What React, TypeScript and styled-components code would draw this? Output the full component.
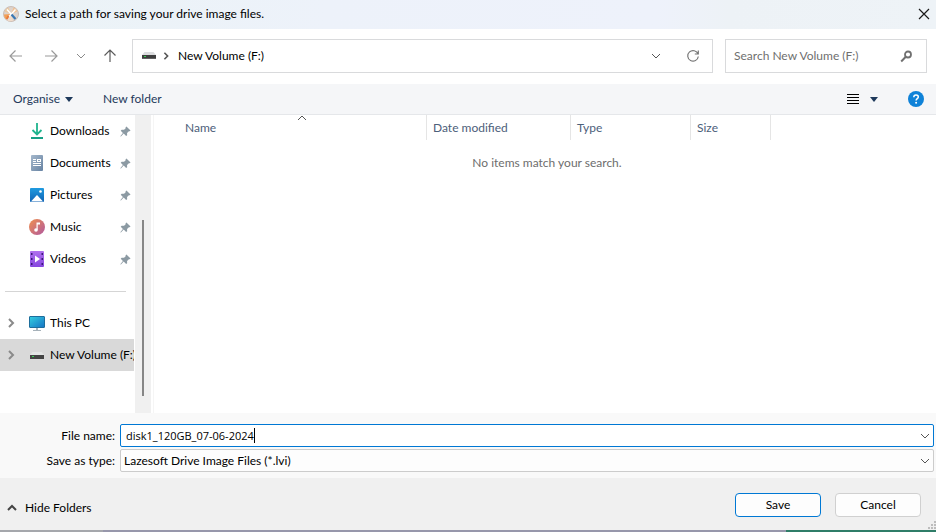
import React, { useState } from "react";
import styled, { createGlobalStyle } from "styled-components";

const GlobalStyle = createGlobalStyle`
  *, *::before, *::after { box-sizing: border-box; }
  body { margin: 0; background: #fff; }
  body, button, input, select {
    font-family: Lato, "Open Sans", sans-serif;
    font-size: 12px;
    line-height: 16px;
    color: #000;
  }
  svg { display: block; flex: none; }
`;

const Dialog = styled.main`
  display: flex;
  flex-direction: column;
  min-height: 100vh;
`;

const TitleBar = styled.header`
  display: flex;
  align-items: center;
  gap: 6px;
  height: 29px;
  padding: 0 6px 2px 3px;
  background: linear-gradient(90deg, #ebf3f6 0%, #edf2fa 35%, #eef2fb 70%, #edf2f6 78%, #eef3f7 100%);
`;

const Title = styled.h1`
  flex: 1;
  margin: 0;
  font-size: 12px;
  font-weight: 400;
  line-height: 16px;
`;

const IconButton = styled.button<{ $w?: number }>`
  display: flex;
  align-items: center;
  justify-content: center;
  width: ${(p) => p.$w ?? 16}px;
  height: 24px;
  padding: 0;
  border: 0;
  background: none;
`;

const NavBar = styled.nav`
  display: flex;
  align-items: center;
  gap: 12px;
  height: 55px;
  padding: 0 9px 1px 8px;
`;

const NavButtons = styled.div`
  display: flex;
  gap: 15px;
  width: 112px;
`;

const AddressBar = styled.div`
  display: flex;
  flex: 1;
  align-items: center;
  height: 34px;
  padding: 0 0 0 9px;
  border: 1px solid #d9dadc;
`;

const Crumb = styled.button`
  flex: 1;
  padding: 0 0 0 2px;
  border: 0;
  background: none;
  text-align: left;
`;

const SearchBox = styled.label`
  display: flex;
  align-items: center;
  width: 202px;
  height: 34px;
  padding: 0 13px 0 8px;
  border: 1px solid #d9dadc;
`;

const SearchInput = styled.input`
  flex: 1;
  min-width: 0;
  padding: 0;
  border: 0;
  outline: 0;
  background: none;
  &::placeholder { color: #6f6f6f; opacity: 1; }
`;

const ToolBar = styled.div`
  display: flex;
  align-items: center;
  height: 31px;
  padding: 0 12px 0 13px;
  border-bottom: 1px solid #e5e7ea;
  background: #f5f6f8;
`;

const ToolButton = styled.button`
  display: flex;
  align-items: center;
  gap: 5px;
  margin-right: 30px;
  padding: 0;
  border: 0;
  background: none;
  color: #1e395b;
`;

const ViewTools = styled.div`
  display: flex;
  gap: 6px;
  margin: 0 26px 0 auto;
`;

const Body = styled.div`
  display: flex;
  flex: 1;
  min-height: 298px;
`;

const Sidebar = styled.aside`
  width: 135px;
  padding-right: 1px;
`;

const FolderLink = styled.a<{ $selected?: boolean }>`
  display: flex;
  align-items: center;
  height: 32px;
  padding-left: 6px;
  overflow: hidden;
  background: ${(p) => (p.$selected ? "#d9d9d9" : "transparent")};
  color: #000;
  text-decoration: none;
  white-space: nowrap;
`;

const Expander = styled.span`
  flex: 0 0 23px;
`;

const FolderName = styled.span<{ $pinned?: boolean }>`
  flex: ${(p) => (p.$pinned ? "0 0 70px" : "none")};
  margin-left: 5px;
`;

const Divider = styled.hr`
  height: 1px;
  margin: 16px 8px 15px 5px;
  border: 0;
  background: #d5d5d5;
`;

const ScrollTrack = styled.div`
  display: flex;
  flex-direction: column;
  align-items: center;
  width: 16px;
  padding: 105px 0 17px;
  background: #f0f0f0;
`;

const ScrollThumb = styled.div`
  flex: 1;
  width: 2px;
  background: #868686;
`;

const FilePane = styled.section`
  flex: 1;
  margin-left: 2px;
  padding-left: 24px;
  border-left: 1px solid #f5f5f5;
`;

const FileTable = styled.table`
  width: 100%;
  border-collapse: separate;
  border-spacing: 0;
  table-layout: fixed;
`;

const HeadCell = styled.th<{ $w?: number }>`
  position: relative;
  width: ${(p) => (p.$w ? `${p.$w}px` : "auto")};
  height: 25px;
  padding: 0 0 0 6px;
  border-right: ${(p) => (p.$w ? "1px solid #e5e5e5" : "0")};
  color: #4c607a;
  font-weight: 400;
  text-align: left;
  &:first-child { padding-left: 7px; }
`;

const SortMark = styled.span`
  position: absolute;
  top: -2px;
  left: 50%;
  transform: translateX(-50%);
`;

const EmptyCell = styled.td`
  height: 46px;
  padding: 0 20px 0 0;
  color: #6d6d6d;
  text-align: center;
`;

const Fields = styled.div`
  display: grid;
  grid-template-columns: 115px 1fr;
  gap: 2px 5px;
  align-items: center;
  padding: 11px 2px 6px 0;
  background: #f9f9f9;
`;

const FieldLabel = styled.label`
  text-align: right;
`;

const Combo = styled.div<{ $active?: boolean }>`
  position: relative;
  display: flex;
  align-items: center;
  height: 23px;
  border: 1px solid ${(p) => (p.$active ? "#0078d4" : "#cccccc")};
  border-radius: 2px;
  background: ${(p) => (p.$active ? "#fff" : "#fdfdfd")};
`;

const NameInput = styled.input`
  field-sizing: content;
  height: 16px;
  padding: 0 0 0 5px;
  border: 0;
  outline: 0;
  background: none;
  font-family: "Open Sans", sans-serif;
  font-size: 11px;
`;

const Caret = styled.span`
  width: 1px;
  height: 15px;
  margin-right: auto;
  background: #000;
`;

const TypeSelect = styled.select`
  flex: 1;
  height: 21px;
  padding: 0 24px 0 3px;
  border: 0;
  outline: 0;
  appearance: none;
  background: none;
`;

const ComboArrow = styled.span`
  position: absolute;
  right: 3px;
  pointer-events: none;
`;

const Footer = styled.footer`
  position: relative;
  display: flex;
  align-items: center;
  gap: 14px;
  height: 52px;
  padding: 2px 15px 0 7px;
  background: #f0f0f0;
`;

const HideButton = styled.button`
  display: flex;
  align-items: center;
  gap: 8px;
  margin: 6px auto 0 0;
  padding: 0;
  border: 0;
  background: none;
`;

const ActionButton = styled.button<{ $primary?: boolean }>`
  width: 86px;
  height: 24px;
  padding: 0;
  border: 1px solid ${(p) => (p.$primary ? "#0078d4" : "#d0d0d0")};
  border-radius: 4px;
  background: #fdfdfd;
`;

const Grip = styled.span`
  position: absolute;
  right: 0;
  bottom: 1px;
`;

const Backdrop = styled.div`
  height: 2px;
  background: linear-gradient(90deg, #a5a7ac 0 11%, #9797ab 11% 84%, #2f7d68 84%);
`;

type ChevronProps = { d: "up" | "down" | "right"; size?: number; color?: string; width?: number };

const Chevron = ({ d, size = 10, color = "#555", width = 1 }: ChevronProps) => {
  const points = { up: "1,7 5,3 9,7", down: "1,3 5,7 9,3", right: "3,1 7,5 3,9" }[d];
  return (
    <svg width={size} height={size} viewBox="0 0 10 10" aria-hidden="true">
      <polyline points={points} fill="none" stroke={color} strokeWidth={width} />
    </svg>
  );
};

const Arrow = ({ turn, color }: { turn: number; color: string }) => (
  <svg width="14" height="14" viewBox="0 0 14 14" aria-hidden="true">
    <g transform={`rotate(${turn} 7 7)`} fill="none" stroke={color} strokeWidth="1.2">
      <path d="M13 7H1.500M6.500 1.500L1 7l5.500 5.500" />
    </g>
  </svg>
);

const Triangle = () => (
  <svg width="8" height="5" viewBox="0 0 8 5" aria-hidden="true">
    <path d="M0 0h8L4 5z" fill="#1e395b" />
  </svg>
);

const AppIcon = () => (
  <svg width="16" height="16" viewBox="0 0 16 16" aria-hidden="true">
    <circle cx="8" cy="8" r="7.500" fill="#ddd3cc" stroke="#cbbdb4" />
    <path d="M8 8L1.500 5.500a7 7 0 0 1 4-4z" fill="#e9c9a0" />
    <path d="M8 8l6.500-2.500a7 7 0 0 0-4-4z" fill="#f0c193" />
    <path d="M8 8L3 13.500a7 7 0 0 1-2-5z" fill="#f2a057" />
    <path d="M8 8l-4 6.200a7 7 0 0 0 6 .5z" fill="#f0dccb" />
    <path d="M4 3.500l5 5.500M12.500 3.500L6 10.500" stroke="#fff" strokeWidth="1.500" />
    <path d="M8.500 8.500l4 4.500" stroke="#3a78b4" strokeWidth="2.200" />
    <path d="M5.500 10l-1.800 3" stroke="#e8793a" strokeWidth="1.800" />
  </svg>
);

const DriveIcon = () => (
  <svg width="14" height="8" viewBox="0 0 14 8" aria-hidden="true">
    <path d="M2.500 0h9L14 3H0z" fill="#dcdddf" />
    <path d="M0 3h14v4H0z" fill="#3e3e3e" />
    <path d="M0 6h14v1H0z" fill="#626262" />
    <path d="M2 4h2v1H2z" fill="#39d353" />
  </svg>
);

const PinIcon = () => (
  <svg width="11" height="11" viewBox="0 0 12 12" aria-hidden="true">
    <path d="M7 0.500L11.500 5l-1 .8-.8-.1-2 2 .1 2.300-1.100 1-2.700-2.700L1 11.500l-.7-.3L3.200 7.500.8 5.200l1-1.100 2.600.1 1.800-1.800-.1-1z" fill="#8c9aa3" />
  </svg>
);

const DownloadsIcon = () => (
  <svg width="16" height="16" viewBox="0 0 16 16" aria-hidden="true">
    <path d="M8 0v11.500M3.500 7L8 11.500 12.500 7" fill="none" stroke="#1fb48e" strokeWidth="1.800" />
    <path d="M2 14h12v2H2z" fill="#16a085" />
  </svg>
);

const DocumentsIcon = () => (
  <svg width="16" height="16" viewBox="0 0 16 16" aria-hidden="true">
    <defs>
      <linearGradient id="doc" x2="1" y2="1"><stop stopColor="#a5b8cc" /><stop offset="1" stopColor="#6783a3" /></linearGradient>
    </defs>
    <rect x="2" width="12" height="16" rx="1" fill="url(#doc)" />
    <path d="M4 4h3v1H4zM4 6h3v1H4zM8 4h4v3H8zM4 8h8v1H4zM4 10h8v1H4z" fill="#fff" />
    <path d="M9 5h2v1H9z" fill="#8aa0b8" />
  </svg>
);

const PicturesIcon = () => (
  <svg width="16" height="16" viewBox="0 0 16 16" aria-hidden="true">
    <defs>
      <linearGradient id="pic" x2="0" y2="1"><stop stopColor="#1f9be0" /><stop offset="1" stopColor="#0f62b4" /></linearGradient>
    </defs>
    <rect x="1" y="1" width="14" height="14" rx="1" fill="url(#pic)" />
    <path d="M2 14.500L8 8l6 6.500z" fill="#fff" />
    <circle cx="11.500" cy="4.500" r="1.300" fill="#fff" />
  </svg>
);

const MusicIcon = () => (
  <svg width="16" height="16" viewBox="0 0 16 16" aria-hidden="true">
    <defs>
      <linearGradient id="mus" x2="1" y2="1"><stop stopColor="#f0914e" /><stop offset="1" stopColor="#b0589f" /></linearGradient>
    </defs>
    <circle cx="8" cy="8" r="8" fill="url(#mus)" />
    <path d="M7.500 3.500h3.500v2H8.700v5.300H7.500z" fill="#fff" />
    <circle cx="7" cy="11" r="1.800" fill="#fff" />
  </svg>
);

const VideosIcon = () => (
  <svg width="16" height="16" viewBox="0 0 16 16" aria-hidden="true">
    <defs>
      <linearGradient id="vid" x2="0" y2="1"><stop stopColor="#b070ee" /><stop offset="1" stopColor="#8646df" /></linearGradient>
    </defs>
    <rect x="1" width="14" height="16" rx="1" fill="url(#vid)" />
    <path d="M2 2h1.500v2H2zM2 7h1.500v2H2zM2 12h1.500v2H2zM12.500 2H14v2h-1.500zM12.500 7H14v2h-1.500zM12.500 12H14v2h-1.500z" fill="#3c1a78" />
    <path d="M6 4.500L11 8l-5 3.500z" fill="#fff" />
  </svg>
);

const PcIcon = () => (
  <svg width="16" height="16" viewBox="0 0 16 16" aria-hidden="true">
    <defs>
      <linearGradient id="pc" x2="1" y2="1"><stop stopColor="#35cfe0" /><stop offset="1" stopColor="#1673c4" /></linearGradient>
    </defs>
    <rect x="0.500" y="1.500" width="15" height="11" rx="0.500" fill="url(#pc)" stroke="#1e6e9c" />
    <path d="M7 13h2v2h3v1H4v-1h3z" fill="#a7b2ba" />
  </svg>
);

const SidebarDrive = () => (
  <svg width="16" height="16" viewBox="0 0 16 16" aria-hidden="true">
    <path d="M3.500 5h9L15 8H1z" fill="#e4e6e6" />
    <path d="M1 8h14v4H1z" fill="#444" />
    <path d="M3 9h2v1H3z" fill="#39d353" />
  </svg>
);

const pinned = [
  { name: "Downloads", Icon: DownloadsIcon },
  { name: "Documents", Icon: DocumentsIcon },
  { name: "Pictures", Icon: PicturesIcon },
  { name: "Music", Icon: MusicIcon },
  { name: "Videos", Icon: VideosIcon },
];

const places = [
  { name: "This PC", Icon: PcIcon, selected: false },
  { name: "New Volume (F:)", Icon: SidebarDrive, selected: true },
];

const columns = [
  { name: "Name", width: 249 },
  { name: "Date modified", width: 144 },
  { name: "Type", width: 120 },
  { name: "Size", width: 80 },
];

export default function App() {
  const [fileName, setFileName] = useState("disk1_120GB_07-06-2024");

  return (
    <Dialog>
      <GlobalStyle />
      <TitleBar>
        <AppIcon />
        <Title>Select a path for saving your drive image files.</Title>
        <IconButton $w={12} aria-label="Close">
          <svg width="12" height="12" viewBox="0 0 12 12" aria-hidden="true">
            <path d="M1 1l10 10M11 1L1 11" stroke="#1a1a1a" strokeWidth="1.200" />
          </svg>
        </IconButton>
      </TitleBar>

      <NavBar>
        <NavButtons>
          <IconButton $w={16} aria-label="Back"><Arrow turn={0} color="#9a9a9a" /></IconButton>
          <IconButton $w={24} aria-label="Forward"><Arrow turn={180} color="#9a9a9a" /></IconButton>
          <IconButton $w={8} aria-label="Recent locations"><Chevron d="down" color="#8a8a8a" /></IconButton>
          <IconButton $w={20} aria-label="Up"><Arrow turn={90} color="#5c5c5c" /></IconButton>
        </NavButtons>
        <AddressBar>
          <DriveIcon />
          <IconButton $w={20} aria-label="Drives"><Chevron d="right" size={8} color="#555" width={2} /></IconButton>
          <Crumb>New Volume (F:)</Crumb>
          <IconButton $w={36} aria-label="Previous locations"><Chevron d="down" /></IconButton>
          <IconButton $w={38} aria-label="Refresh">
            <svg width="14" height="14" viewBox="0 0 14 14" aria-hidden="true">
              <path d="M12 5A5.300 5.300 0 1 0 12.300 7.500M12.300 1.500V5H8.800" fill="none" stroke="#777" strokeWidth="1.200" />
            </svg>
          </IconButton>
        </AddressBar>
        <SearchBox>
          <SearchInput aria-label="Search" placeholder="Search New Volume (F:)" />
          <svg width="13" height="13" viewBox="0 0 13 13" aria-hidden="true">
            <circle cx="8" cy="4.500" r="3" fill="none" stroke="#707070" strokeWidth="1.800" />
            <path d="M5.800 6.800L1.200 11.500" stroke="#707070" strokeWidth="2" />
          </svg>
        </SearchBox>
      </NavBar>

      <ToolBar>
        <ToolButton>Organise <Triangle /></ToolButton>
        <ToolButton>New folder</ToolButton>
        <ViewTools>
          <IconButton $w={14} aria-label="Change view">
            <svg width="12" height="10" viewBox="0 0 12 10" aria-hidden="true">
              <path d="M0 0h12v1H0zM0 3h12v1H0zM0 6h12v1H0zM0 9h12v1H0z" fill="#000" />
            </svg>
          </IconButton>
          <IconButton $w={16} aria-label="More view options"><Triangle /></IconButton>
        </ViewTools>
        <IconButton $w={16} aria-label="Help">
          <svg width="16" height="16" viewBox="0 0 16 16" aria-hidden="true">
            <circle cx="8" cy="8" r="8" fill="#0f82d8" />
            <path d="M5.800 6.200C5.800 3.200 10.300 3.400 10.300 6c0 1.700-2.200 1.700-2.200 3.500" fill="none" stroke="#fff" strokeWidth="1.500" />
            <circle cx="8.100" cy="11.800" r="1" fill="#fff" />
          </svg>
        </IconButton>
      </ToolBar>

      <Body>
        <Sidebar aria-label="Folders">
          {pinned.map(({ name, Icon }) => (
            <FolderLink key={name} href="#">
              <Expander />
              <Icon />
              <FolderName $pinned>{name}</FolderName>
              <PinIcon />
            </FolderLink>
          ))}
          <Divider />
          {places.map(({ name, Icon, selected }) => (
            <FolderLink key={name} href="#" $selected={selected}>
              <Expander><Chevron d="right" color="#8a8a8a" width={2} /></Expander>
              <Icon />
              <FolderName>{name}</FolderName>
            </FolderLink>
          ))}
        </Sidebar>
        <ScrollTrack><ScrollThumb /></ScrollTrack>
        <FilePane>
          <FileTable>
            <thead>
              <tr>
                {columns.map(({ name, width }, i) => (
                  <HeadCell key={name} $w={width}>
                    {name}
                    {i === 0 && <SortMark><Chevron d="up" /></SortMark>}
                  </HeadCell>
                ))}
                <HeadCell as="td" />
              </tr>
            </thead>
            <tbody>
              <tr><EmptyCell colSpan={5}>No items match your search.</EmptyCell></tr>
            </tbody>
          </FileTable>
        </FilePane>
      </Body>

      <Fields>
        <FieldLabel htmlFor="file-name">File name:</FieldLabel>
        <Combo $active>
          <NameInput id="file-name" value={fileName} onChange={(e) => setFileName(e.target.value)} />
          <Caret />
          <ComboArrow><Chevron d="down" /></ComboArrow>
        </Combo>
        <FieldLabel htmlFor="file-type">Save as type:</FieldLabel>
        <Combo>
          <TypeSelect id="file-type">
            <option>Lazesoft Drive Image Files (*.lvi)</option>
          </TypeSelect>
          <ComboArrow><Chevron d="down" /></ComboArrow>
        </Combo>
      </Fields>

      <Footer>
        <HideButton><Chevron d="up" color="#444" width={2} />Hide Folders</HideButton>
        <ActionButton $primary>Save</ActionButton>
        <ActionButton>Cancel</ActionButton>
        <Grip>
          <svg width="8" height="8" viewBox="0 0 8 8" aria-hidden="true">
            <path d="M6 0h2v2H6zM3 3h2v2H3zM6 3h2v2H6zM0 6h2v2H0zM3 6h2v2H3zM6 6h2v2H6z" fill="#bdbdbd" />
          </svg>
        </Grip>
      </Footer>
      <Backdrop />
    </Dialog>
  );
}
